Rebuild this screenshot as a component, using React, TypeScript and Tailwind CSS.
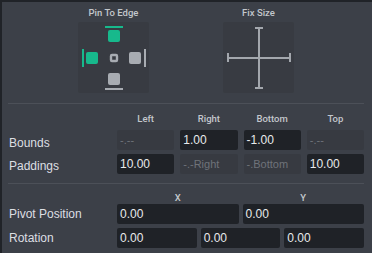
import React from "react";

const font = { fontFamily: '"Liberation Sans", Arial, sans-serif' };
const hfont = { fontFamily: 'Roboto, "Liberation Sans", Arial, sans-serif' };

function Field({ value, placeholder }: { value?: string; placeholder?: string }) {
  if (value !== undefined) {
    return (
      <div className="h-[20px] bg-[#1f2227] rounded-[2px] flex items-center pl-[3px] text-[12px] text-[#e8eaec] leading-none">
        {value}
      </div>
    );
  }
  return (
    <div className="h-[20px] bg-[#373a41] rounded-[2px] flex items-center pl-[3px] text-[11px] text-[#6f737a] leading-none">
      {placeholder}
    </div>
  );
}

function PinIcon() {
  const g = "#17b98c";
  const s = "#a8acb2";
  return (
    <svg width="71" height="71" viewBox="0 0 71 71">
      <rect x="27" y="4" width="18" height="2" fill={g} />
      <rect x="30" y="8" width="12" height="12" rx="2" fill={g} />
      <rect x="4" y="27" width="2" height="18" fill={g} />
      <rect x="8" y="30" width="12" height="12" rx="2" fill={g} />
      <rect x="33" y="33" width="6" height="6" rx="1" fill="none" stroke={s} strokeWidth="2.4" />
      <rect x="51" y="30" width="12" height="12" rx="2" fill={s} />
      <rect x="66" y="27" width="2" height="18" fill={s} />
      <rect x="30" y="51" width="12" height="12" rx="2" fill={s} />
      <rect x="27" y="66" width="18" height="2" fill={s} />
    </svg>
  );
}

function SizeIcon() {
  const s = "#a3a7ad";
  return (
    <svg width="71" height="71" viewBox="0 0 71 71">
      <rect x="35" y="5" width="2" height="62" fill={s} />
      <rect x="4" y="35" width="64" height="2" fill={s} />
      <rect x="32" y="5" width="8" height="2" fill={s} />
      <rect x="32" y="65" width="8" height="2" fill={s} />
      <rect x="4" y="31" width="2" height="9" fill={s} />
      <rect x="66" y="31" width="2" height="9" fill={s} />
    </svg>
  );
}

function Head({ children, className = "" }: { children: React.ReactNode; className?: string }) {
  return (
    <div
      className={"text-[9.5px] leading-[12px] font-medium text-[#c3c7cc] text-center " + className}
      style={hfont}
    >
      {children}
    </div>
  );
}

export default function App() {
  return (
    <div
      className="w-[372px] h-[253px] bg-[#3c4048] border-t-2 border-l-2 border-[#202328] overflow-hidden flex flex-col"
      style={font}
    >
      <div className="flex justify-center gap-[74px] mr-[2px] pt-[5px]">
        <div className="flex flex-col items-center">
          <div className="text-[9.5px] leading-[12px] h-[12px] font-medium text-[#c3c7cc] mb-[3px]" style={hfont}>
            Pin To Edge
          </div>
          <div className="w-[71px] h-[71px] bg-[#383b42] rounded-[2px]">
            <PinIcon />
          </div>
        </div>
        <div className="flex flex-col items-center">
          <div className="text-[9.5px] leading-[12px] h-[12px] font-medium text-[#c3c7cc] mb-[3px]" style={hfont}>
            Fix Size
          </div>
          <div className="w-[71px] h-[71px] bg-[#383b42] rounded-[2px]">
            <SizeIcon />
          </div>
        </div>
      </div>

      <div className="mt-[10px] ml-[6px] mr-[8px] h-px bg-[#4c5058]" />

      <div className="pl-[6px] pr-[8px] mt-[9px] grid grid-cols-[103px_1fr_1fr_1fr_1fr] gap-x-[6px] gap-y-[4px] items-center">
        <div />
        <Head className="mb-[1px]">Left</Head>
        <Head className="mb-[1px]">Right</Head>
        <Head className="mb-[1px]">Bottom</Head>
        <Head className="mb-[1px]">Top</Head>

        <div className="text-[12px] text-[#dcdfe3] pl-[1px] relative top-[3px]">Bounds</div>
        <Field placeholder="-.--" />
        <Field value="1.00" />
        <Field value="-1.00" />
        <Field placeholder="-.--" />

        <div className="text-[12px] text-[#dcdfe3] pl-[1px] relative top-[2px]">Paddings</div>
        <Field value="10.00" />
        <Field placeholder="-.-Right" />
        <Field placeholder="-.Bottom" />
        <Field value="10.00" />
      </div>

      <div className="mt-[9px] ml-[6px] mr-[8px] h-px bg-[#4c5058]" />

      <div className="pl-[6px] pr-[8px] mt-[8px] flex flex-col gap-[4px]">
        <div className="flex gap-[4px] items-center">
          <div className="w-[105px] shrink-0" />
          <div className="flex-1 grid grid-cols-2 gap-x-[4px]">
            <Head className="-mb-[4px]">X</Head>
            <Head className="-mb-[4px]">Y</Head>
          </div>
        </div>
        <div className="flex gap-[4px] items-center">
          <div className="w-[105px] shrink-0 text-[12px] text-[#dcdfe3] pl-[1px]">Pivot Position</div>
          <div className="flex-1 grid grid-cols-2 gap-x-[4px]">
            <Field value="0.00" />
            <Field value="0.00" />
          </div>
        </div>
        <div className="flex gap-[4px] items-center">
          <div className="w-[105px] shrink-0 text-[12px] text-[#dcdfe3] pl-[1px]">Rotation</div>
          <div className="flex-1 grid grid-cols-3 gap-x-[4px]">
            <Field value="0.00" />
            <Field value="0.00" />
            <Field value="0.00" />
          </div>
        </div>
      </div>
    </div>
  );
}
